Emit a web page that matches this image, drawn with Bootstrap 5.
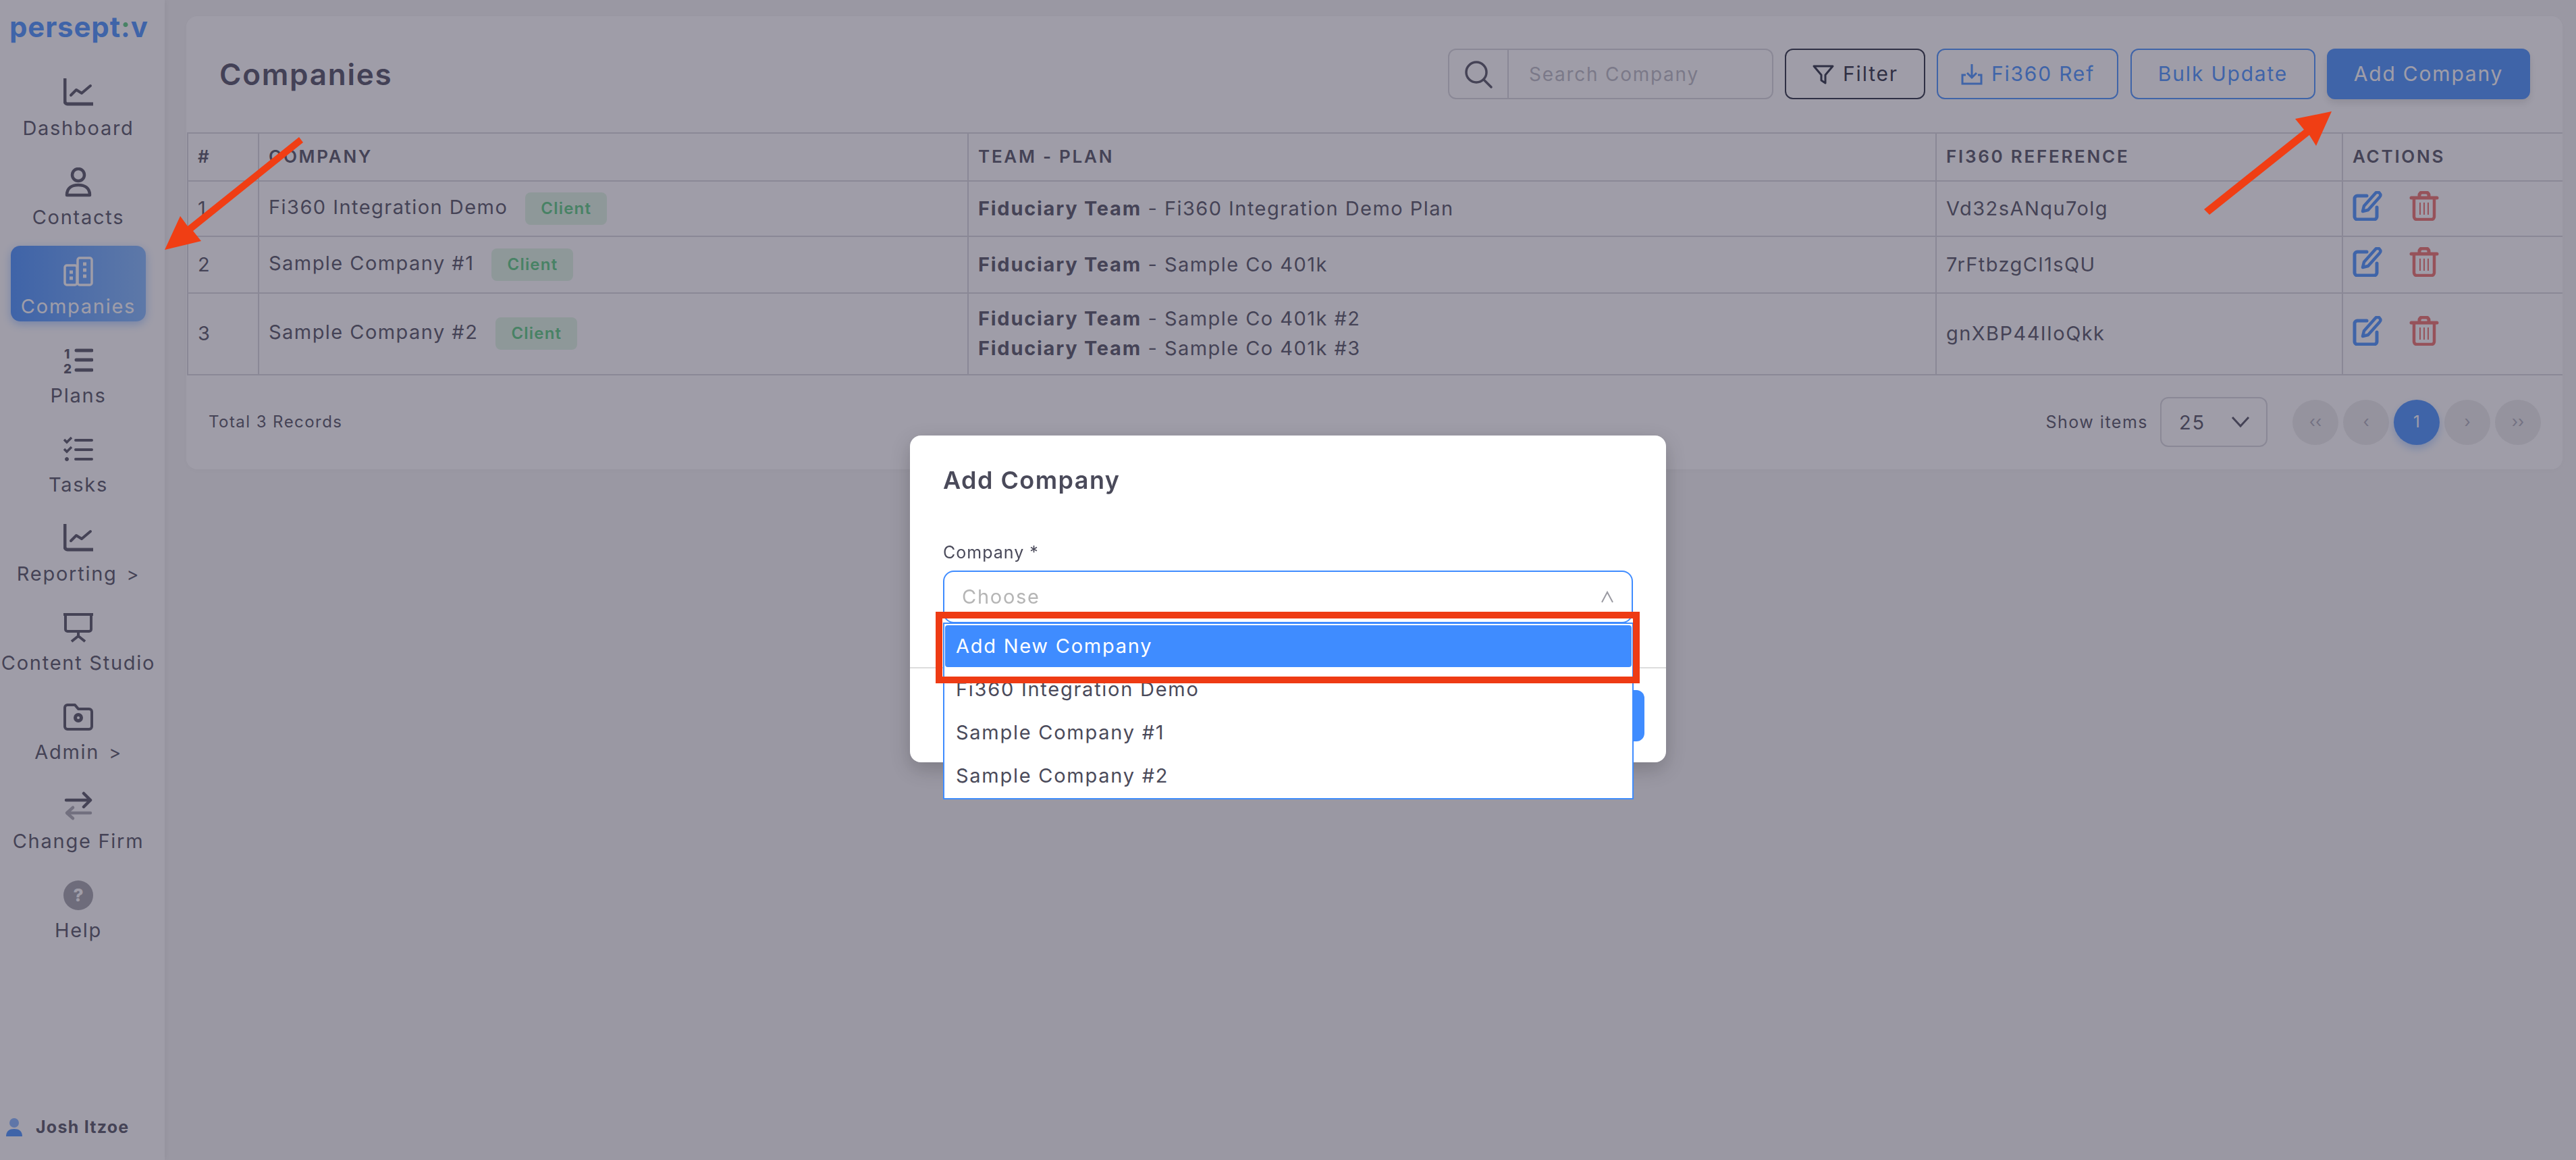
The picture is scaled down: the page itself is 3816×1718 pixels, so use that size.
<!DOCTYPE html>
<html lang="en">
<head>
<meta charset="utf-8">
<title>Companies</title>
<link href="https://cdn.jsdelivr.net/npm/bootstrap@5.3.0/dist/css/bootstrap.min.css" rel="stylesheet">
<style>
:root{--pv-blue:#3f8cff;--pv-ink:#4a4a5a;--pv-line:#d5d5da}
html,body{height:100%}
body{background:#f5f5f5;color:var(--pv-ink);font-family:Inter,"Liberation Sans",sans-serif;font-size:29px;letter-spacing:.06em;overflow:hidden}
.rail{width:244px;background:#fff;flex:none;height:1718px;box-shadow:2px 0 8px rgba(0,0,0,.06)}
.rail-logo{margin:15px 0 0 14px;height:85px;font-size:42px;font-weight:700;line-height:50px;color:var(--pv-blue);letter-spacing:.02em}
.logo-colon{background:linear-gradient(180deg,#50c878 0 62%,var(--pv-blue) 62%);-webkit-background-clip:text;background-clip:text;color:transparent}
.rail-link{width:200px;height:112px;margin:0 16px 20px;padding-top:16px;border-radius:14px;color:var(--pv-ink);text-decoration:none;white-space:nowrap}
.rail-link svg{width:44px;height:44px;display:block}
.rail-label{display:block;margin-top:12px;line-height:36px;font-size:29px}
.rail-link.is-on{background:linear-gradient(90deg,var(--pv-blue),#7bb5ff);color:#fff;box-shadow:0 4px 14px rgba(63,140,255,.45)}
.rail-more{margin-left:14px;font-size:27px}
.rail-user{margin:auto 0 30px 9px;font-size:25px;font-weight:700;gap:20px;letter-spacing:.05em}
.rail-user svg{width:24px;height:27px}
.page-wrap{padding:24px 20px 0 32px;min-width:0}
.sheet{height:671px;background:#fff;border-radius:16px;box-shadow:0 2px 10px rgba(0,0,0,.03);overflow:hidden}
.sheet-top{height:173px;padding:0 48px 0 49px}
.sheet-title{font-size:44px;font-weight:600;margin:0;letter-spacing:.04em;color:#46465a}
.find-box{width:482px;height:75px;border:2px solid var(--pv-line);border-radius:12px;margin-right:17px}
.find-ico{width:88px;border-right:2px solid var(--pv-line)}
.find-ico svg{width:44px;height:44px}
.find-text{padding-left:30px;color:#b7b7c0;font-size:28px}
.tool-btn{height:75px;font-size:30px;border-radius:12px;border-width:2px;padding:0;letter-spacing:.06em;white-space:nowrap;display:inline-flex;align-items:center;justify-content:center;gap:12px}
.tool-dark{width:208px;border-color:#1f2537;color:#1f2537;margin-right:17px}
.tool-line{border-color:var(--pv-blue);color:var(--pv-blue)}
.tool-ref{width:269px;margin-right:18px}
.tool-bulk{width:274px;margin-right:17px}
.tool-main{width:301px;background:var(--pv-blue);border-color:var(--pv-blue);color:#fff;box-shadow:0 6px 12px rgba(0,0,0,.12)}
.tool-btn svg{width:34px;height:34px}
.grid-table{table-layout:fixed;width:3520px;margin:0 0 0 1px;--bs-table-bg:transparent;--bs-table-color:var(--pv-ink);--bs-table-border-color:var(--pv-line);border-width:0}
.table.grid-table>*>*>*{border:2px solid var(--pv-line);padding:0 14px;vertical-align:middle;line-height:44px;font-size:29px;letter-spacing:.05em}
.table.grid-table thead th{height:71px;font-size:26px;font-weight:600;letter-spacing:.105em;text-transform:uppercase}
.grid-table strong{font-weight:700;letter-spacing:.06em}
.row-a{height:82px}.row-b{height:84px}.row-c{height:121px}
.tag-client{--bs-badge-font-size:24px;--bs-badge-font-weight:600;--bs-badge-padding-x:0;--bs-badge-padding-y:0;--bs-badge-border-radius:8px;background:#dcf5e0;color:#50c878;width:121px;height:48px;line-height:48px;margin-left:26px;vertical-align:middle;letter-spacing:.05em}
.act-wrap{margin-bottom:8px;gap:40px}
.act-ico{width:44px;height:44px;display:block}
.act-edit{color:var(--pv-blue)}
.act-trash{color:#ed6963}
.sheet-foot{height:140px;padding:0 32px 0 33px;font-size:24px}
.size-pick{width:159px;height:74px;border:2px solid var(--pv-line);border-radius:12px;margin:0 37px 0 18px;padding:0 24px 0 26px;font-size:29px}
.size-pick svg{width:28px;height:18px}
.foot-label{font-size:24px;letter-spacing:.06em}
.foot-show{font-size:25px}
.pager{gap:8px;margin:0;--bs-pagination-border-width:0}
.pager .page-link{width:68px;height:67px;border-radius:50%!important;background:#ebebeb;color:#a8a8b4;display:flex;align-items:center;justify-content:center;padding:0;font-size:24px;border:0;margin:0;letter-spacing:0}
.pager .active .page-link{background:var(--pv-blue);color:#fff;box-shadow:0 6px 12px rgba(63,140,255,.35)}
.modal-backdrop.dim-layer{--bs-backdrop-bg:#3f3b51;--bs-backdrop-opacity:.5;background:#3f3b51}
.add-dialog{max-width:1120px;width:1120px;margin:645px 0 0 1348px}
.add-content{height:484px;border:0;border-radius:16px;box-shadow:0 10px 30px rgba(0,0,0,.2)}
.add-head{height:343px;padding:0 49px;display:block;border:0}
.add-title{padding-top:46px;font-size:36px;line-height:40px;font-weight:600;margin:0;color:var(--pv-ink);letter-spacing:.04em}
.add-label{display:block;margin:72px 0 12px;font-size:25px;line-height:30px;letter-spacing:.04em}
.pick-field{height:78px;border:2px solid var(--pv-blue);border-radius:16px;padding:0 26px;color:#b5b5b5;font-size:29px}
.pick-field svg{width:20px;height:18px}
.pick-menu{position:absolute;display:block;left:49px;top:277px;width:1023px;min-width:0;height:262px;padding:2px 1px 1px;margin:0;border:2px solid var(--pv-blue);border-radius:0;z-index:5;background:#fff}
.pick-menu .dropdown-item{height:64px;line-height:64px;padding:0 16px;font-size:29px;color:var(--pv-ink)}
.pick-menu .dropdown-item.active{height:62px;line-height:62px;margin-bottom:1px;background:var(--pv-blue);color:#fff;border-radius:4px}
.add-foot{height:141px;border-top:2px solid #ddd;padding:0 32px;margin-top:auto;justify-content:flex-end}
.add-save{height:76px;width:200px;background:var(--pv-blue);border:0;border-radius:12px;color:#fff;font-size:28px;margin:0}
.mark-layer{position:fixed;left:0;top:0;width:3816px;height:1718px;z-index:1060;pointer-events:none}
</style>
</head>
<body class="d-flex">
<svg width="0" height="0" class="position-absolute">
  <symbol id="i-chart" viewBox="0 0 44 44"><path d="M2 1v33a4 4 0 0 0 4 4h38" fill="none" stroke="currentColor" stroke-width="5" stroke-linecap="round"/><path d="M11 25l8-8 8 5 13-11" fill="none" stroke="currentColor" stroke-width="4" stroke-linecap="round" stroke-linejoin="round"/></symbol>
  <symbol id="i-edit" viewBox="0 0 44 44"><path d="M21 7H7a4 4 0 0 0-4 4v27a4 4 0 0 0 4 4h25a4 4 0 0 0 4-4V24" fill="none" stroke="currentColor" stroke-width="5" stroke-linecap="round"/><path d="M17 22L34 3c2-2 4-2 6 0s2 4 0 6L23 28l-8 2z" fill="none" stroke="currentColor" stroke-width="4.5" stroke-linejoin="round"/></symbol>
  <symbol id="i-trash" viewBox="0 0 44 44"><path d="M3 10h38M15 9V6a4 4 0 0 1 4-4h6a4 4 0 0 1 4 4v3" fill="none" stroke="currentColor" stroke-width="5" stroke-linecap="round"/><path d="M7 11v27a4 4 0 0 0 4 4h22a4 4 0 0 0 4-4V11" fill="none" stroke="currentColor" stroke-width="4.5"/><path d="M16 17v18M22 17v18M28 17v18" stroke="currentColor" stroke-width="2"/></symbol>
</svg>

<aside class="rail d-flex flex-column">
  <div class="rail-logo">persept<span class="logo-colon">:</span>v</div>
  <a class="rail-link d-flex flex-column align-items-center" href="#"><svg viewBox="0 0 44 44"><use href="#i-chart"/></svg><span class="rail-label">Dashboard</span></a>
  <a class="rail-link d-flex flex-column align-items-center" href="#"><svg viewBox="0 0 44 44" fill="none" stroke="currentColor" stroke-width="4.5"><circle cx="22" cy="11" r="9"/><path d="M5 41c0-11 8-15 17-15s17 4 17 15z" stroke-linejoin="round"/></svg><span class="rail-label">Contacts</span></a>
  <a class="rail-link is-on d-flex flex-column align-items-center" href="#"><svg viewBox="0 0 44 44" fill="none" stroke="currentColor" stroke-width="3.5"><rect x="2" y="13" width="18" height="29" rx="3"/><rect x="21" y="2" width="21" height="40" rx="3"/><path d="M9 23h5M9 32h5M29 11h5M29 20h5M29 29h5" stroke-width="5"/></svg><span class="rail-label">Companies</span></a>
  <a class="rail-link d-flex flex-column align-items-center" href="#"><svg viewBox="0 0 44 44"><text x="1" y="19" font-size="19" font-weight="800" fill="currentColor" font-family="Inter,sans-serif" letter-spacing="0">1</text><text x="0" y="41" font-size="19" font-weight="800" fill="currentColor" font-family="Inter,sans-serif" letter-spacing="0">2</text><path d="M19 7h23M19 21h23M19 36h23" stroke="currentColor" stroke-width="5" stroke-linecap="round"/></svg><span class="rail-label">Plans</span></a>
  <a class="rail-link d-flex flex-column align-items-center" href="#"><svg viewBox="0 0 44 44" fill="none" stroke="currentColor"><path d="M1 7l4 4 7-7M1 21l4 4 7-7" stroke-width="3.5"/><path d="M18 8h24M18 22h24M18 36h24" stroke-width="4" stroke-linecap="round"/><circle cx="5" cy="36" r="2.5" fill="currentColor" stroke-width="1"/></svg><span class="rail-label">Tasks</span></a>
  <a class="rail-link d-flex flex-column align-items-center" href="#"><svg viewBox="0 0 44 44"><use href="#i-chart"/></svg><span class="rail-label">Reporting<span class="rail-more">&gt;</span></span></a>
  <a class="rail-link d-flex flex-column align-items-center" href="#"><svg viewBox="0 0 44 44" fill="none" stroke="currentColor" stroke-width="4"><path d="M0 2h44" stroke-linecap="round"/><path d="M3 3v21a3 3 0 0 0 3 3h32a3 3 0 0 0 3-3V3"/><path d="M22 27v6M12 42l10-8 10 8"/></svg><span class="rail-label">Content Studio</span></a>
  <a class="rail-link d-flex flex-column align-items-center" href="#"><svg viewBox="0 0 44 44" fill="none" stroke="currentColor" stroke-width="4"><path d="M2 8a4 4 0 0 1 4-4h11l5 6h16a4 4 0 0 1 4 4v22a4 4 0 0 1-4 4H6a4 4 0 0 1-4-4z" stroke-linejoin="round"/><circle cx="22" cy="23" r="6" fill="currentColor" stroke-width="2"/><circle cx="22" cy="23" r="2" fill="#fff" stroke="none"/></svg><span class="rail-label">Admin<span class="rail-more">&gt;</span></span></a>
  <a class="rail-link d-flex flex-column align-items-center" href="#"><svg viewBox="0 0 44 44" fill="none" stroke="currentColor" stroke-width="4.5" stroke-linecap="round" stroke-linejoin="round"><path d="M4 13h36M30 3l10 10-10 10"/><path d="M40 32H5M14 24l-9 8 9 8" opacity=".5"/></svg><span class="rail-label">Change Firm</span></a>
  <a class="rail-link d-flex flex-column align-items-center" href="#"><svg viewBox="0 0 44 44"><circle cx="22" cy="22" r="22" fill="currentColor" opacity=".55"/><text x="22" y="31" text-anchor="middle" font-size="26" font-weight="800" fill="#fff" font-family="Inter,sans-serif" letter-spacing="0">?</text></svg><span class="rail-label">Help</span></a>
  <div class="rail-user d-flex align-items-center"><svg viewBox="0 0 24 27"><circle cx="12" cy="7" r="7" fill="#7fb0ff"/><path d="M0 27c0-8 5-11 12-11s12 3 12 11z" fill="#3f8cff"/></svg><span>Josh Itzoe</span></div>
</aside>

<main class="page-wrap flex-grow-1">
  <section class="sheet d-flex flex-column">
    <div class="sheet-top d-flex align-items-center justify-content-between">
      <h1 class="sheet-title">Companies</h1>
      <div class="d-flex align-items-center">
        <div class="find-box d-flex align-items-stretch">
          <div class="find-ico d-flex align-items-center justify-content-center"><svg viewBox="0 0 44 44" fill="none" stroke="#4a4a5a" stroke-width="3.5" stroke-linecap="round"><circle cx="19" cy="19" r="15"/><path d="M30 30l11 11"/></svg></div>
          <div class="find-text d-flex align-items-center">Search Company</div>
        </div>
        <button class="btn tool-btn tool-dark" type="button"><svg viewBox="0 0 34 34" fill="none" stroke="currentColor" stroke-width="3" stroke-linejoin="round"><path d="M3 5h28L20 18v12l-6-4v-8z"/></svg>Filter</button>
        <button class="btn tool-btn tool-line tool-ref" type="button"><svg viewBox="0 0 34 34" fill="none" stroke="currentColor" stroke-width="3"><path d="M17 2v20M10 15l7 7 7-7"/><path d="M8 18H3v13h28V18h-5"/></svg>Fi360 Ref</button>
        <button class="btn tool-btn tool-line tool-bulk" type="button">Bulk Update</button>
        <button class="btn tool-btn tool-main" type="button">Add Company</button>
      </div>
    </div>
    <table class="table grid-table mb-0">
      <colgroup><col style="width:105px"><col style="width:1051px"><col style="width:1434px"><col style="width:602px"><col style="width:328px"></colgroup>
      <thead><tr><th>#</th><th>Company</th><th>Team - Plan</th><th>Fi360 Reference</th><th>Actions</th></tr></thead>
      <tbody>
        <tr class="row-a"><td>1</td><td>Fi360 Integration Demo<span class="badge tag-client">Client</span></td><td><strong>Fiduciary Team</strong> - Fi360 Integration Demo Plan</td><td>Vd32sANqu7olg</td><td><div class="act-wrap d-flex align-items-center"><svg class="act-ico act-edit"><use href="#i-edit"/></svg><svg class="act-ico act-trash"><use href="#i-trash"/></svg></div></td></tr>
        <tr class="row-b"><td>2</td><td>Sample Company #1<span class="badge tag-client">Client</span></td><td><strong>Fiduciary Team</strong> - Sample Co 401k</td><td>7rFtbzgCl1sQU</td><td><div class="act-wrap d-flex align-items-center"><svg class="act-ico act-edit"><use href="#i-edit"/></svg><svg class="act-ico act-trash"><use href="#i-trash"/></svg></div></td></tr>
        <tr class="row-c"><td>3</td><td>Sample Company #2<span class="badge tag-client">Client</span></td><td><strong>Fiduciary Team</strong> - Sample Co 401k #2<br><strong>Fiduciary Team</strong> - Sample Co 401k #3</td><td>gnXBP44IIoQkk</td><td><div class="act-wrap d-flex align-items-center"><svg class="act-ico act-edit"><use href="#i-edit"/></svg><svg class="act-ico act-trash"><use href="#i-trash"/></svg></div></td></tr>
      </tbody>
    </table>
    <div class="sheet-foot d-flex align-items-center justify-content-between">
      <div class="foot-label">Total 3 Records</div>
      <div class="d-flex align-items-center">
        <span class="foot-label foot-show">Show items</span>
        <div class="size-pick d-flex align-items-center justify-content-between"><span>25</span><svg viewBox="0 0 28 18" fill="none" stroke="currentColor" stroke-width="3"><path d="M2 2l12 13L26 2"/></svg></div>
        <ul class="pagination pager">
          <li class="page-item"><a class="page-link" href="#">‹‹</a></li>
          <li class="page-item"><a class="page-link" href="#">‹</a></li>
          <li class="page-item active"><a class="page-link" href="#">1</a></li>
          <li class="page-item"><a class="page-link" href="#">›</a></li>
          <li class="page-item"><a class="page-link" href="#">››</a></li>
        </ul>
      </div>
    </div>
  </section>
</main>

<div class="modal-backdrop dim-layer show"></div>
<div class="modal d-block" tabindex="-1">
  <div class="modal-dialog add-dialog">
    <div class="modal-content add-content">
      <div class="add-head position-relative">
        <h2 class="add-title">Add Company</h2>
        <label class="add-label">Company *</label>
        <div class="pick-field d-flex align-items-center justify-content-between"><span>Choose</span><svg viewBox="0 0 20 18" fill="none" stroke="#9a9aa2" stroke-width="2"><path d="M2 17L10 2l8 15"/></svg></div>
        <div class="dropdown-menu pick-menu">
          <a class="dropdown-item active" href="#">Add New Company</a>
          <a class="dropdown-item" href="#">Fi360 Integration Demo</a>
          <a class="dropdown-item" href="#">Sample Company #1</a>
          <a class="dropdown-item" href="#">Sample Company #2</a>
        </div>
      </div>
      <div class="modal-footer add-foot"><button class="btn add-save" type="button">Save</button></div>
    </div>
  </div>
</div>

<svg class="mark-layer" viewBox="0 0 3816 1718">
  <g fill="#f03e14">
    <polygon points="443,203 449,211 286,342 298,357 244,370 267,320 278,335"/>
    <polygon points="3454,165 3431,216 3421,200 3273,318 3265,310 3413,192 3400,176"/>
  </g>
  <rect x="1391" y="911" width="1033" height="96" fill="none" stroke="#ee3b14" stroke-width="10"/>
</svg>
</body>
</html>
